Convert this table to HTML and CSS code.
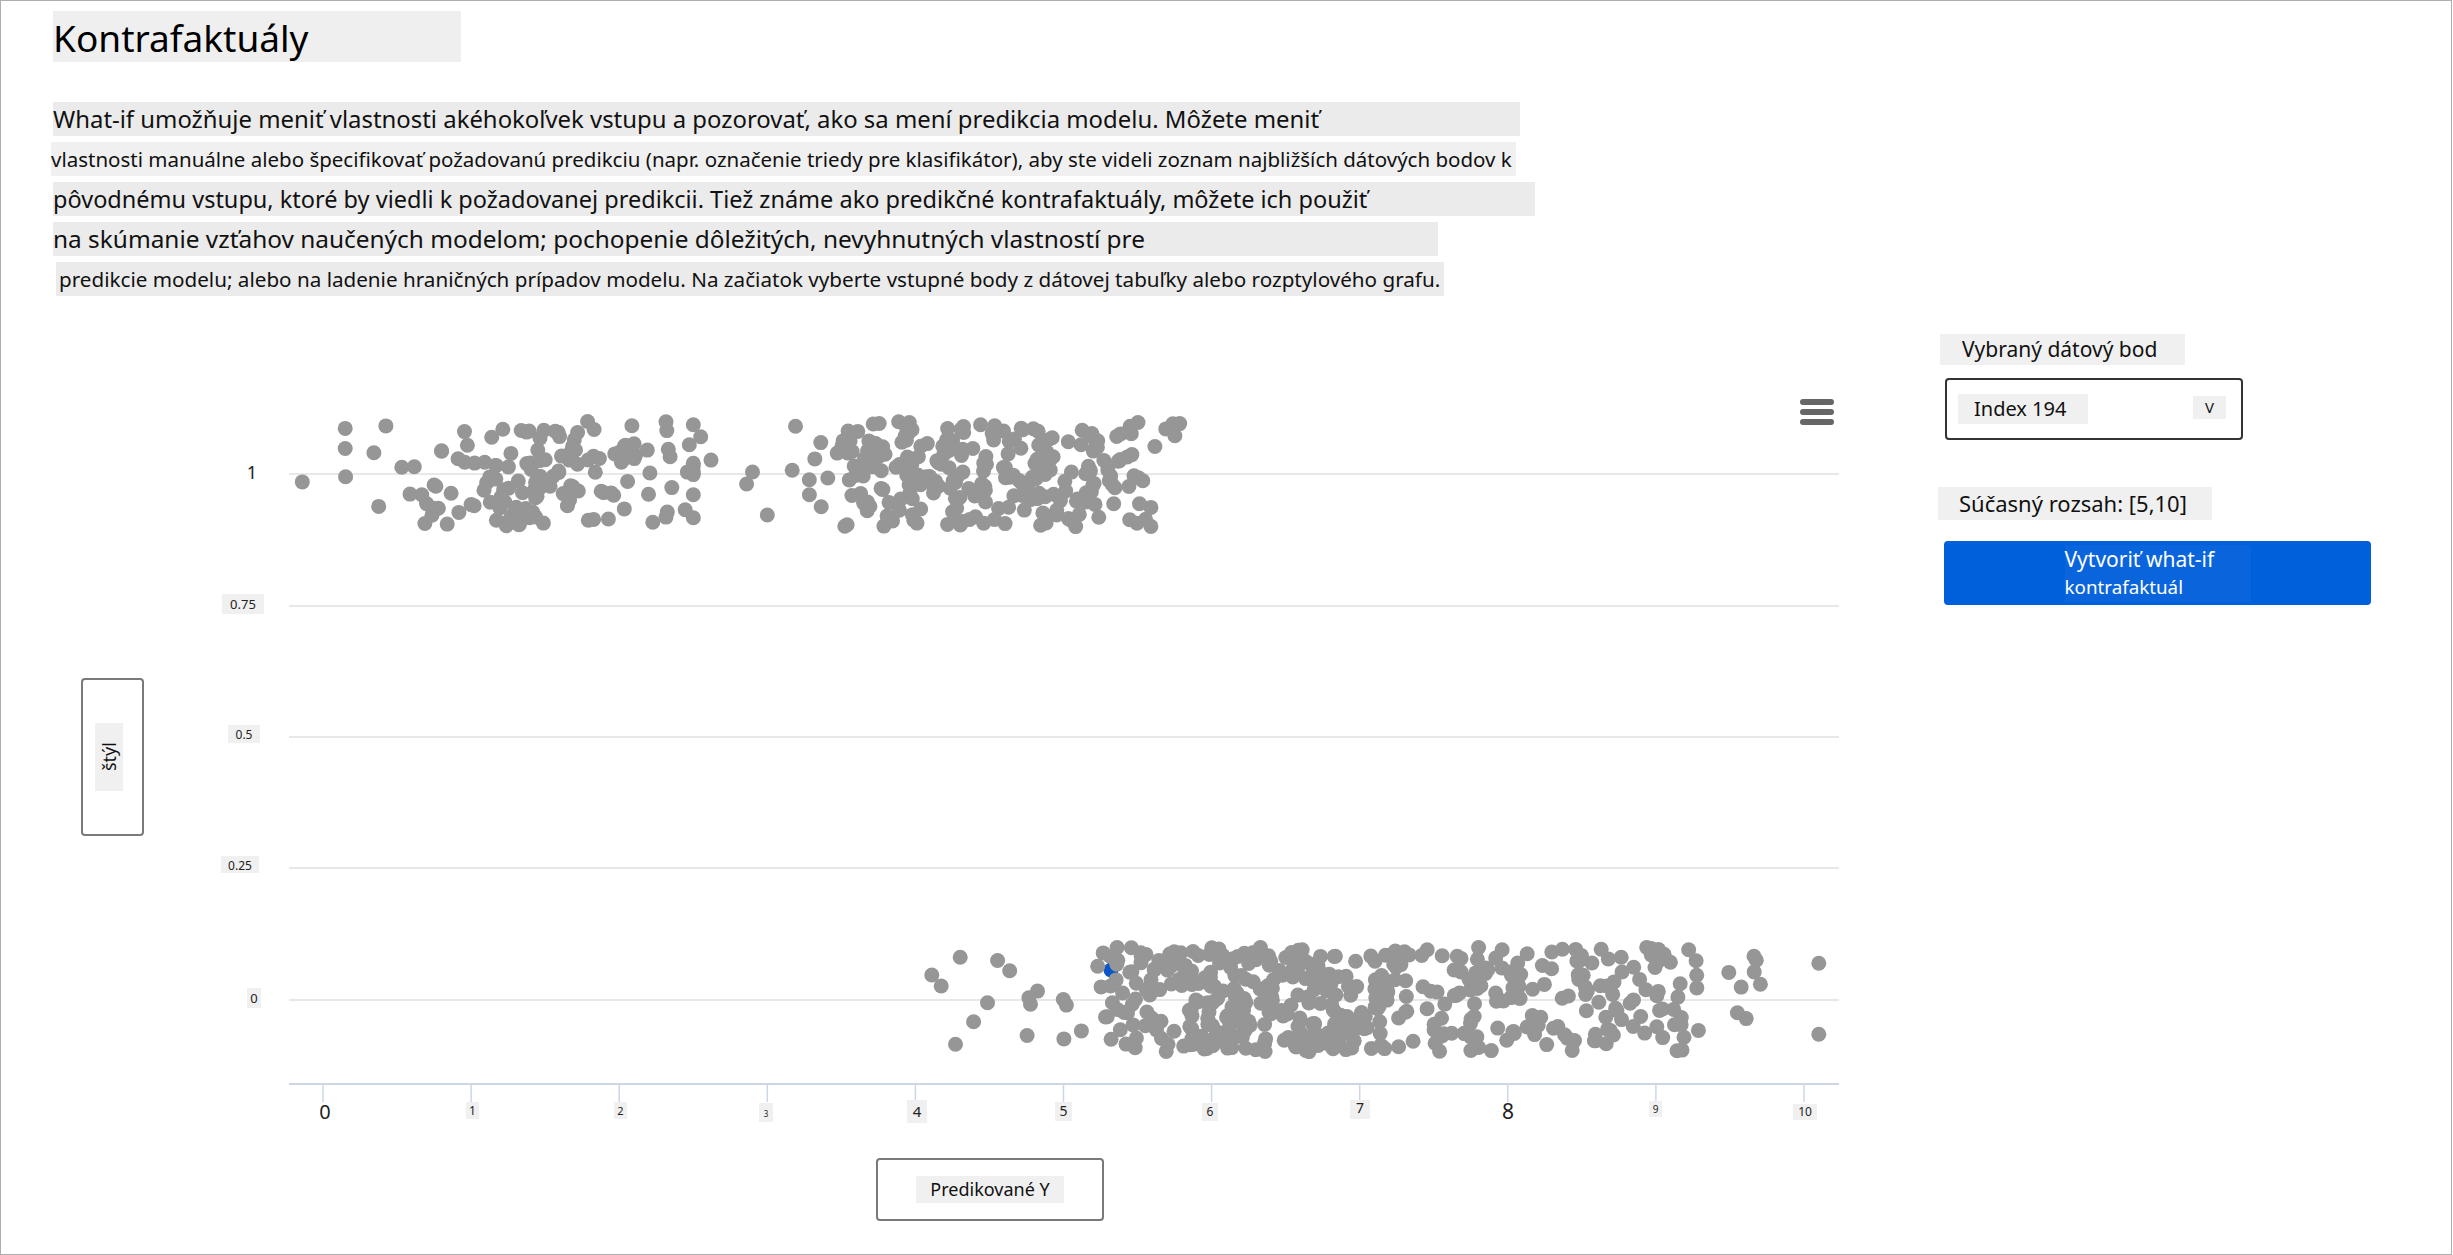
FILE: index.html
```html
<!DOCTYPE html>
<html lang="sk">
<head>
<meta charset="utf-8">
<title>Kontrafaktuály</title>
<link rel="stylesheet" href="styles.css">
</head>
<body>
<div class="page">
  <h1 class="title">Kontrafaktuály</h1>
  <div class="intro">
    <p class="line l1">What-if umožňuje meniť vlastnosti akéhokoľvek vstupu a pozorovať, ako sa mení predikcia modelu. Môžete meniť</p>
    <p class="line l2">vlastnosti manuálne alebo špecifikovať požadovanú predikciu (napr. označenie triedy pre klasifikátor), aby ste videli zoznam najbližších dátových bodov k</p>
    <p class="line l3">pôvodnému vstupu, ktoré by viedli k požadovanej predikcii. Tiež známe ako predikčné kontrafaktuály, môžete ich použiť</p>
    <p class="line l4">na skúmanie vzťahov naučených modelom; pochopenie dôležitých, nevyhnutných vlastností pre</p>
    <p class="line l5">predikcie modelu; alebo na ladenie hraničných prípadov modelu. Na začiatok vyberte vstupné body z dátovej tabuľky alebo rozptylového grafu.</p>
  </div>
  <div class="main">
    <section class="chart">
      <div class="chart-body">
        <div class="axis-title y-title"><span class="y-label">štýl</span></div>
        <svg class="plot" viewBox="180 380 1670 755" xmlns="http://www.w3.org/2000/svg">
          <g class="grid">
            <line x1="289" y1="474" x2="1839" y2="474"/>
            <line x1="289" y1="606" x2="1839" y2="606"/>
            <line x1="289" y1="737" x2="1839" y2="737"/>
            <line x1="289" y1="868" x2="1839" y2="868"/>
            <line x1="289" y1="1000" x2="1839" y2="1000"/>
          </g>
          <line class="x-axis" x1="289" y1="1084" x2="1839" y2="1084"/>
          <g class="ticks">
            <line x1="323" y1="1085" x2="323" y2="1102"/>
            <line x1="471.1" y1="1085" x2="471.1" y2="1102"/>
            <line x1="619.2" y1="1085" x2="619.2" y2="1102"/>
            <line x1="767.3" y1="1085" x2="767.3" y2="1102"/>
            <line x1="915.4" y1="1085" x2="915.4" y2="1102"/>
            <line x1="1063.5" y1="1085" x2="1063.5" y2="1102"/>
            <line x1="1211.6" y1="1085" x2="1211.6" y2="1102"/>
            <line x1="1359.7" y1="1085" x2="1359.7" y2="1102"/>
            <line x1="1507.8" y1="1085" x2="1507.8" y2="1102"/>
            <line x1="1655.9" y1="1085" x2="1655.9" y2="1102"/>
            <line x1="1804" y1="1085" x2="1804" y2="1102"/>
          </g>
          <g class="labels">
            <text class="lbl end" x="257" y="479" font-size="18">1</text>
            <rect class="lbl-box" x="222" y="594" width="42" height="20"/>
            <text class="lbl" x="243" y="609" font-size="13">0.75</text>
            <rect class="lbl-box" x="228" y="725" width="32" height="18"/>
            <text class="lbl" x="244" y="739" font-size="12">0.5</text>
            <rect class="lbl-box" x="221" y="856" width="38" height="17"/>
            <text class="lbl" x="240" y="870" font-size="12">0.25</text>
            <rect class="lbl-box" x="247" y="988" width="14" height="20"/>
            <text class="lbl" x="254" y="1003" font-size="13">0</text>

            <text class="lbl" x="325" y="1119" font-size="20">0</text>
            <rect class="lbl-box" x="466" y="1102" width="13" height="17"/>
            <text class="lbl" x="472.5" y="1115" font-size="12">1</text>
            <rect class="lbl-box" x="614" y="1102" width="13" height="17"/>
            <text class="lbl" x="620.5" y="1115" font-size="11">2</text>
            <rect class="lbl-box" x="759" y="1103" width="14" height="19"/>
            <text class="lbl" x="766" y="1117" font-size="8">3</text>
            <rect class="lbl-box" x="907" y="1100" width="20" height="23"/>
            <text class="lbl" x="917" y="1117" font-size="15">4</text>
            <rect class="lbl-box" x="1055" y="1102" width="17" height="19"/>
            <text class="lbl" x="1063.5" y="1116" font-size="14">5</text>
            <rect class="lbl-box" x="1202" y="1103" width="16" height="18"/>
            <text class="lbl" x="1210" y="1116" font-size="12">6</text>
            <rect class="lbl-box" x="1350" y="1100" width="20" height="19"/>
            <text class="lbl" x="1360" y="1113" font-size="14">7</text>
            <text class="lbl" x="1508" y="1119" font-size="21">8</text>
            <rect class="lbl-box" x="1649" y="1101" width="13" height="16"/>
            <text class="lbl" x="1655.5" y="1113" font-size="10">9</text>
            <rect class="lbl-box" x="1793" y="1104" width="24" height="16"/>
            <text class="lbl" x="1805" y="1116" font-size="12">10</text>
          </g>
          <circle class="selected" cx="1111" cy="970" r="7.5"/>
          <g id="dots"></g>
          <g class="menu">
            <rect x="1800" y="399" width="34" height="6" rx="3"/>
            <rect x="1800" y="409" width="34" height="6" rx="3"/>
            <rect x="1800" y="419" width="34" height="6" rx="3"/>
          </g>
        </svg>
      </div>
      <div class="axis-title x-title"><span class="x-label">Predikované Y</span></div>
    </section>
    <aside class="panel">
      <div class="panel-label point-label">Vybraný dátový bod</div>
      <div class="dropdown">
        <span class="dropdown-value">Index 194</span>
        <span class="dropdown-caret">V</span>
      </div>
      <div class="panel-label range-label">Súčasný rozsah: [5,10]</div>
      <div class="cta" role="button" tabindex="0">
        <div class="cta-text">
          <span class="cta-main">Vytvoriť what-if</span>
          <span class="cta-sub">kontrafaktuál</span>
        </div>
      </div>
    </aside>
  </div>
</div>
<script src="app.js"></script>
</body>
</html>
```

FILE: styles.css
```css
* { box-sizing: border-box; }
html, body { margin: 0; padding: 0; background: #fff; }
body {
  font-family: "Noto Sans", "Open Sans", "Liberation Sans", sans-serif;
  color: #111;
}
.page {
  width: 2452px;
  height: 1255px;
  border: 1px solid #aeaeae;
  padding: 10px 0 0 52px;
  overflow: hidden;
}
.title {
  margin: 0;
  width: 408px;
  height: 51px;
  background: #efefef;
  font-size: 37px;
  font-weight: 400;
  line-height: 53px;
  color: #000;
  white-space: nowrap;
}
.intro {
  margin-top: 40px;
  display: flex;
  flex-direction: column;
  align-items: flex-start;
  gap: 6px;
}
.line {
  margin: 0;
  height: 34px;
  line-height: 34px;
  background: #ebebeb;
  white-space: nowrap;
  color: #111;
}
.l1 { width: 1467px; font-size: 23.9px; }
.l2 { width: 1465px; font-size: 20.5px; margin-left: -2px; background: #f0f0f0; }
.l3 { width: 1482px; font-size: 23.5px; }
.l4 { width: 1385px; font-size: 24.4px; }
.l5 { width: 1388px; font-size: 20.65px; margin-left: 3px; padding-left: 3px; }

.main { display: flex; align-items: flex-start; }
.chart { width: 1797px; padding-top: 84px; flex: none; }
.chart-body { display: flex; align-items: flex-start; }
.axis-title {
  border: 2px solid #7a7a7a;
  border-radius: 4px;
  display: flex;
  align-items: center;
  justify-content: center;
  background: #fff;
  flex: none;
}
.y-title { margin: 298px 0 0 28px; width: 63px; height: 158px; padding-right: 7px; }
.y-label {
  writing-mode: vertical-rl;
  transform: rotate(180deg);
  width: 28px;
  height: 68px;
  line-height: 28px;
  text-align: center;
  background: #f0f0f0;
  font-size: 18px;
  color: #111;
}
.plot { display: block; margin-left: 36px; width: 1670px; height: 755px; flex: none; }
.grid line { stroke: #e8e8e8; stroke-width: 2; }
.x-axis { stroke: #ccd6eb; stroke-width: 2; }
.ticks line { stroke: #ccd6eb; stroke-width: 1.5; }
.lbl-box { fill: #f0f0f0; }
.lbl { fill: #222; text-anchor: middle; font-family: "Noto Sans", "Open Sans", sans-serif; }
.lbl.end { text-anchor: end; }
.dot { fill: #969696; }
.selected { fill: #0a56c8; }
.menu rect { fill: #666; }
.x-title { margin: 23px 0 0 823px; width: 228px; height: 63px; }
.x-label {
  width: 148px;
  height: 27px;
  line-height: 27px;
  text-align: center;
  background: #f0f0f0;
  font-size: 18px;
  color: #111;
}

.panel { margin-left: 88px; padding-top: 38px; width: 440px; flex: none; }
.panel-label {
  background: #f0f0f0;
  font-size: 21px;
  height: 31px;
  line-height: 31px;
  color: #111;
  white-space: nowrap;
}
.point-label { margin-left: 2px; width: 245px; padding-left: 22px; }
.dropdown {
  margin: 13px 0 0 7px;
  width: 298px;
  height: 62px;
  border: 2px solid #333;
  border-radius: 4px;
  display: flex;
  align-items: center;
  justify-content: space-between;
  padding: 0 15px 0 11px;
}
.dropdown-value {
  width: 130px;
  height: 30px;
  line-height: 30px;
  padding-left: 16px;
  background: #f0f0f0;
  font-size: 20px;
  color: #111;
}
.dropdown-caret {
  width: 33px;
  height: 23px;
  line-height: 23px;
  text-align: center;
  background: #f0f0f0;
  font-size: 15px;
  margin-top: -4px;
  color: #111;
}
.range-label { margin-top: 47px; width: 274px; height: 33px; line-height: 33px; padding-left: 21px; font-size: 22px; }
.cta {
  margin: 21px 0 0 6px;
  width: 427px;
  height: 64px;
  border-radius: 4px;
  background: #0060dc;
  display: flex;
  justify-content: center;
  align-items: center;
  cursor: pointer;
}
.cta-text {
  width: 186px;
  height: 57px;
  background: #0a65dd;
  color: #fff;
  display: flex;
  flex-direction: column;
  align-items: flex-start;
  white-space: nowrap;
}
.cta-main { font-size: 21px; line-height: 29px; }
.cta-sub { font-size: 18.8px; line-height: 26px; }
```

FILE: app.js
```js
(function () {
  var layer = document.getElementById('dots');
  var NS = 'http://www.w3.org/2000/svg';
  var seed = 194;
  function rnd() {
    seed |= 0; seed = seed + 0x6D2B79F5 | 0;
    var t = Math.imul(seed ^ seed >>> 15, 1 | seed);
    t = t + Math.imul(t ^ t >>> 7, 61 | t) ^ t;
    return ((t ^ t >>> 14) >>> 0) / 4294967296;
  }
  function norm() { return (rnd() + rnd() + rnd() + rnd() - 2) / 0.5774; }
  function uni(a, b) { return a + (b - a) * rnd(); }
  function clamp(v, a, b) { return Math.max(a, Math.min(b, v)); }
  var X0 = 323, XS = 148.1, YS = 526;
  function dot(v, base, jit) {
    var c = document.createElementNS(NS, 'circle');
    c.setAttribute('class', 'dot');
    c.setAttribute('cx', (X0 + v * XS).toFixed(1));
    c.setAttribute('cy', (base - jit * YS).toFixed(1));
    c.setAttribute('r', '7.5');
    layer.appendChild(c);
  }
  function j() { return uni(-0.1, 0.1); }
  var i;
  dot(-0.14, 474, -0.015);
  for (i = 0; i < 150; i++) dot(clamp(1.45 + 0.55 * norm(), 0.15, 2.5), 474, j());
  [2.55, 2.62, 2.86, 2.9, 3.0].forEach(function (v) { dot(v, 474, j()); });
  for (i = 0; i < 250; i++) {
    var v = rnd() < 0.7 ? uni(3.5, 5.6) : uni(3.15, 5.8);
    dot(v, 474, j());
  }
  for (i = 0; i < 16; i++) dot(uni(4.1, 5.2), 1000, j());
  for (i = 0; i < 330; i++) dot(uni(5.2, 9.3), 1000, j());
  for (i = 0; i < 130; i++) dot(uni(5.8, 7.3), 1000, j());
  for (i = 0; i < 8; i++) dot(uni(9.3, 9.75), 1000, j());
  dot(10.1, 1000, 0.07);
  dot(10.1, 1000, -0.065);
  dot(5.36, 1000, 0.068);
})();
```
